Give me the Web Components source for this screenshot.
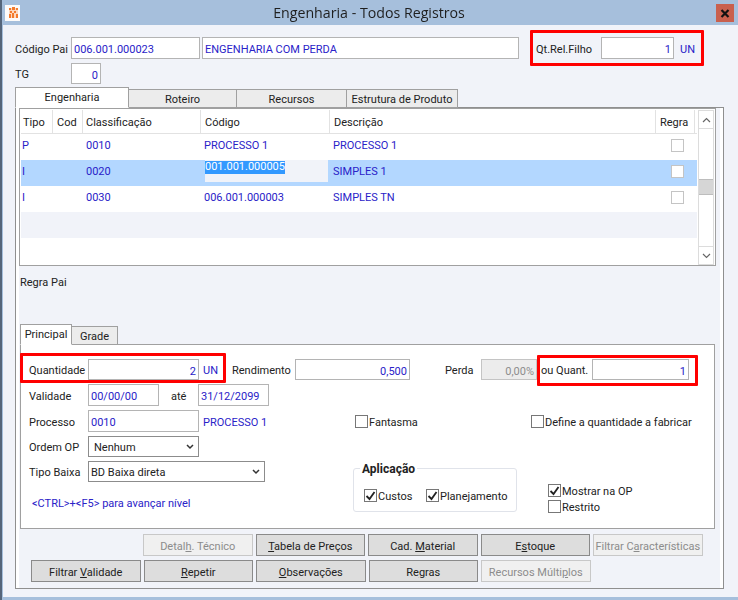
<!DOCTYPE html>
<html lang="pt">
<head>
<meta charset="utf-8">
<title>Engenharia - Todos Registros</title>
<style>
  html, body { margin: 0; padding: 0; width: 738px; height: 600px; overflow: hidden; background: #a6bfdc; }
  body { font: 11px Roboto, "Open Sans", "Liberation Sans", sans-serif; color: #222; }
  u { text-decoration: underline; }
</style>
</head>
<body>

<erp-window caption="Engenharia - Todos Registros">

  <erp-row top="12" left="12" height="22">
    <erp-text w="56">Código Pai</erp-text>
    <erp-input w="129" color="blue">006.001.000023</erp-input>
    <erp-input w="317" color="blue" style="margin-left:2px">ENGENHARIA COM PERDA</erp-input>
    <erp-text w="65" style="margin-left:17px">Qt.Rel.Filho</erp-text>
    <erp-input w="73" align="right" color="blue">1</erp-input>
    <erp-text color="blue" style="margin-left:6px">UN</erp-text>
  </erp-row>

  <erp-row top="4" left="12" height="21">
    <erp-text w="56">TG</erp-text>
    <erp-input w="30" align="right" color="blue">0</erp-input>
  </erp-row>

  <erp-tabs style="margin:4px 14px 0 12px;height:501px">
    <erp-tab slot="tabs" active w="114">Engenharia</erp-tab>
    <erp-tab slot="tabs" w="109">Roteiro</erp-tab>
    <erp-tab slot="tabs" w="111">Recursos</erp-tab>
    <erp-tab slot="tabs" w="112">Estrutura de Produto</erp-tab>

    <erp-grid>
      <erp-grid-row tipo="P" classif="0010" codigo="PROCESSO 1" descr="PROCESSO 1"></erp-grid-row>
      <erp-grid-row selected tipo="I" classif="0020" codigo="001.001.000005" descr="SIMPLES 1"></erp-grid-row>
      <erp-grid-row tipo="I" classif="0030" codigo="006.001.000003" descr="SIMPLES TN"></erp-grid-row>
      <erp-grid-row blank alt></erp-grid-row>
      <erp-grid-row blank></erp-grid-row>
    </erp-grid>

    <erp-row top="7" left="1" height="16"><erp-text>Regra Pai</erp-text></erp-row>

    <erp-tabs small style="margin:35px 5px 0 1px;height:205px">
      <erp-tab slot="tabs" active small w="52">Principal</erp-tab>
      <erp-tab slot="tabs" small w="47">Grade</erp-tab>

      <erp-row top="14" left="8" height="21">
        <erp-text w="59">Quantidade</erp-text>
        <erp-input w="111" align="right" color="blue">2</erp-input>
        <erp-text color="blue" w="29" style="margin-left:4px">UN</erp-text>
        <erp-text w="63">Rendimento</erp-text>
        <erp-input w="115" align="right" color="blue">0,500</erp-input>
        <erp-text w="36" style="margin-left:35px">Perda</erp-text>
        <erp-input w="56" align="right" disabled>0,00%</erp-input>
        <erp-text w="51" style="margin-left:4px">ou Quant.</erp-text>
        <erp-input w="97" align="right" color="blue">1</erp-input>
      </erp-row>

      <erp-row top="4" left="8" height="22">
        <erp-text w="59">Validade</erp-text>
        <erp-input w="71" color="blue">00/00/00</erp-input>
        <erp-text w="27" style="margin-left:12px">até</erp-text>
        <erp-input w="71" color="blue">31/12/2099</erp-input>
      </erp-row>

      <erp-row top="4" left="8" height="22">
        <erp-text w="59">Processo</erp-text>
        <erp-input w="111" color="blue">0010</erp-input>
        <erp-text color="blue" w="152" style="margin-left:4px">PROCESSO 1</erp-text>
        <erp-check w="176">Fantasma</erp-check>
        <erp-check>Define a quantidade a fabricar</erp-check>
      </erp-row>

      <erp-lower>
        <erp-row top="4" left="8" height="21">
          <erp-text w="59">Ordem OP</erp-text>
          <erp-select w="111" pad="5">Nenhum</erp-select>
        </erp-row>
        <erp-row top="4" left="8" height="21">
          <erp-text w="59">Tipo Baixa</erp-text>
          <erp-select w="177" pad="2">BD Baixa direta</erp-select>
        </erp-row>
        <erp-row top="10" left="11" height="20">
          <erp-text color="blue">&lt;CTRL&gt;+&lt;F5&gt; para avançar nível</erp-text>
        </erp-row>

        <erp-group slot="side" caption="Aplicação">
          <erp-check checked w="62">Custos</erp-check>
          <erp-check checked>Planejamento</erp-check>
        </erp-group>

        <erp-stack slot="side">
          <erp-check checked>Mostrar na OP</erp-check>
          <erp-check>Restrito</erp-check>
        </erp-stack>
      </erp-lower>
    </erp-tabs>

    <erp-buttons>
      <erp-button disabled>Detal<u>h</u>. Técnico</erp-button>
      <erp-button><u>T</u>abela de Preços</erp-button>
      <erp-button>Cad. <u>M</u>aterial</erp-button>
      <erp-button>E<u>s</u>toque</erp-button>
      <erp-button disabled>Filtrar C<u>a</u>racterísticas</erp-button>
    </erp-buttons>
    <erp-buttons first>
      <erp-button>Filtrar <u>V</u>alidade</erp-button>
      <erp-button><u>R</u>epetir</erp-button>
      <erp-button><u>O</u>bservações</erp-button>
      <erp-button>Re<u>g</u>ras</erp-button>
      <erp-button disabled>Recursos Múlti<u>p</u>los</erp-button>
    </erp-buttons>
  </erp-tabs>

  <!-- red annotation boxes drawn over the form -->
  <erp-mark x="530" y="30" w="174" h="36"></erp-mark>
  <erp-mark x="20" y="353" w="206" h="30"></erp-mark>
  <erp-mark x="537" y="355" w="161" h="31"></erp-mark>
</erp-window>

<script>
const BLUE = '#2a22c8';

// small helper, every element below follows the same pattern
class Base extends HTMLElement {
    constructor() {
        super();
        this.attachShadow({ mode: 'open' });
    }
    connectedCallback() {
        this.render();
    }
    attr(name, fallback) {
        return this.hasAttribute(name) ? this.getAttribute(name) : fallback;
    }
}

class ErpWindow extends Base {
    render() {
        this.shadowRoot.innerHTML = `
            <style>
                :host { display: flex; flex-direction: column; width: 738px; height: 600px; box-sizing: border-box; position: relative; filter: blur(0.3px);
                    background: linear-gradient(90deg, #55657a 2px, transparent 2px); }
                .bar { height: 25px; flex: none; display: flex; align-items: center; justify-content: center; position: relative;
                    font: 14.2px "Open Sans", sans-serif; color: #1f1f1f; }
                .icon { position: absolute; left: 5px; top: 5px; width: 15px; height: 16px; }
                .close { position: absolute; right: 4px; top: 4px; width: 18px; height: 18px; background: #c9604e; display: flex; align-items: center; justify-content: center; }
                .client { flex: none; height: 572px; margin-left: 3px; background: #f1f3f9; box-sizing: border-box; display: flex; flex-direction: column; }
            </style>
            <div class="bar">
                <svg class="icon" viewBox="0 0 15 16">
                    <rect width="15" height="16" fill="#fdfbfa"/>
                    <rect x="4" y="3" width="9" height="10" fill="#fcd9c0"/>
                    <path d="M4 3h2v2H4zM7 2h3v3H7zM11 3h2v2h-2zM5 6h2v2H5zM9 6h2v2H9zM4 9h2v4H4zM7 8h2v5H7zM11 9h2v4h-2z" fill="#f47a2c"/>
                </svg>
                ${this.attr('caption', '')}
                <div class="close">
                    <svg width="10" height="9" viewBox="0 0 10 9"><path d="M1.5 1l7 7M8.5 1l-7 7" stroke="#111" stroke-width="2.2"/></svg>
                </div>
            </div>
            <div class="client"><slot></slot></div>
        `;
    }
}

class ErpRow extends Base {
    render() {
        this.shadowRoot.innerHTML = `
            <style>
                :host { display: flex; align-items: center; flex: none;
                    margin-top: ${this.attr('top', 0)}px; margin-left: ${this.attr('left', 0)}px; height: ${this.attr('height', 22)}px; }
            </style>
            <slot></slot>
        `;
    }
}

class ErpText extends Base {
    render() {
        const w = this.attr('w');
        this.shadowRoot.innerHTML = `
            <style>
                :host { display: block; flex: none; white-space: nowrap; padding-top: 2px; ${w ? `width:${w}px;` : ''}
                    color: ${this.attr('color') === 'blue' ? BLUE : '#222'}; }
            </style>
            <slot></slot>
        `;
    }
}

class ErpInput extends Base {
    render() {
        const off = this.hasAttribute('disabled');
        this.shadowRoot.innerHTML = `
            <style>
                :host { display: block; flex: none; box-sizing: border-box; height: 100%; width: ${this.attr('w', 80)}px;
                    background: ${off ? '#ececec' : '#fff'}; border: 1px solid ${off ? '#c4c4c4' : '#b4b4b4'};
                    color: ${off ? '#8c8c8c' : BLUE}; }
                div { display: flex; height: 100%; align-items: center; padding: 3px 2px 0 2px; box-sizing: border-box;
                    justify-content: ${this.attr('align') === 'right' ? 'flex-end' : 'flex-start'}; white-space: nowrap; }
            </style>
            <div><span><slot></slot></span></div>
        `;
    }
}

class ErpSelect extends Base {
    render() {
        this.shadowRoot.innerHTML = `
            <style>
                :host { display: flex; align-items: center; justify-content: space-between; flex: none; box-sizing: border-box;
                    height: 100%; width: ${this.attr('w', 80)}px; background: #fff; border: 1px solid #8c8c8c;
                    padding: 0 4px 0 ${this.attr('pad', 5)}px; color: #222; }
                span { padding-top: 2px; }
            </style>
            <span><slot></slot></span>
            <svg width="8" height="6" viewBox="0 0 8 6"><path d="M1 1l3 3 3-3" fill="none" stroke="#333" stroke-width="1.5"/></svg>
        `;
    }
}

class ErpCheck extends Base {
    render() {
        const w = this.attr('w');
        const tick = this.hasAttribute('checked')
            ? '<svg width="11" height="10" viewBox="0 0 11 10"><path d="M1.5 5l3 3 5-7" fill="none" stroke="#222" stroke-width="1.8"/></svg>'
            : '';
        this.shadowRoot.innerHTML = `
            <style>
                :host { display: flex; align-items: center; flex: none; height: 13px; white-space: nowrap; ${w ? `width:${w}px;` : ''} color: #222; }
                .box { width: 13px; height: 13px; box-sizing: border-box; border: 1px solid #777; background: #fff; margin-right: 1px;
                    display: flex; align-items: center; justify-content: center; }
                .label { padding-top: 2px; }
            </style>
            <span class="box">${tick}</span><span class="label"><slot></slot></span>
        `;
    }
}

class ErpTabs extends Base {
    render() {
        const small = this.hasAttribute('small');
        this.shadowRoot.innerHTML = `
            <style>
                :host { display: flex; flex-direction: column; flex: none; box-sizing: border-box; }
                .strip { display: flex; align-items: flex-end; height: ${small ? 21 : 20}px; flex: none; position: relative; z-index: 1; margin-bottom: -1px; }
                .page { flex: 1; min-height: 0; box-sizing: border-box; border: 1px solid ${small ? '#a0a0a0' : '#8f8f8f'};
                    background: ${small ? '#fff' : '#f1f3f9'}; display: flex; flex-direction: column; }
                .page.main { box-shadow: inset 3px 0 0 #fff, inset -3px 0 0 #fff; padding: 0 3px; }
            </style>
            <div class="strip"><slot name="tabs"></slot></div>
            <div class="page ${small ? '' : 'main'}"><slot></slot></div>
        `;
    }
}

class ErpTab extends Base {
    render() {
        const active = this.hasAttribute('active');
        const h = active ? 21 : 19;
        this.shadowRoot.innerHTML = `
            <style>
                :host { display: flex; align-items: center; justify-content: center; flex: none; box-sizing: border-box;
                    width: ${this.attr('w', 80)}px; height: ${h}px; white-space: nowrap; color: #222;
                    background: ${active ? '#fff' : '#ececec'}; border: 1px solid #a0a0a0; margin-left: -1px;
                    ${active ? 'border-bottom-color:#fff; margin-left:0; position:relative; z-index:1;' : ''} }
                span { padding-top: ${active ? 0 : 2}px; }
            </style>
            <span><slot></slot></span>
        `;
    }
}

const GRID_COLS = '33px 30px 118px 129px 326px 39px';

class ErpGrid extends Base {
    render() {
        const heads = [['Tipo', 2], ['Cod', 3], ['Classificação', 2], ['Código', 3], ['Descrição', 3], ['Regra', 3]];
        this.shadowRoot.innerHTML = `
            <style>
                :host { display: flex; flex: none; height: 158px; margin-right: 4px; box-sizing: border-box;
                    background: #fff; border: 1px solid #a0a0a0; padding: 1px 1px 0 1px; }
                .body { flex: 1; min-width: 0; }
                .head { display: grid; grid-template-columns: ${GRID_COLS}; height: 23px; border-bottom: 1px solid #e2e2e2; color: #222; }
                .head span { display: flex; align-items: center; border-right: 1px solid #e2e2e2; margin-right: 1px; padding-top: 2px; box-sizing: border-box; }
                .scroll { width: 16px; flex: none; border: 1px solid #dcdcdc; box-sizing: border-box; margin-left: 1px; height: 155px;
                    display: flex; flex-direction: column; background: #fff; }
                .arrow { height: 17px; flex: none; display: flex; align-items: center; justify-content: center; border-bottom: 1px solid #dcdcdc; }
                .arrow.down { border-bottom: 0; border-top: 1px solid #dcdcdc; }
                .track { flex: 1; padding-top: 50px; box-sizing: border-box; }
                .thumb { height: 16px; background: #d6d6d6; border-top: 1px solid #bdbdbd; border-bottom: 1px solid #bdbdbd; box-sizing: border-box; }
            </style>
            <div class="body">
                <div class="head">${heads.map(h => `<span style="padding-left:${h[1]}px">${h[0]}</span>`).join('')}</div>
                <slot></slot>
            </div>
            <div class="scroll">
                <div class="arrow"><svg width="9" height="6" viewBox="0 0 9 6"><path d="M1 5l3.5-3.5L8 5" fill="none" stroke="#666" stroke-width="1.2"/></svg></div>
                <div class="track"><div class="thumb"></div></div>
                <div class="arrow down"><svg width="9" height="6" viewBox="0 0 9 6"><path d="M1 1l3.5 3.5L8 1" fill="none" stroke="#666" stroke-width="1.2"/></svg></div>
            </div>
        `;
    }
}

class ErpGridRow extends Base {
    render() {
        const selected = this.hasAttribute('selected');
        const bg = selected ? '#b3d7ff' : (this.hasAttribute('alt') ? '#f1f3f9' : '#fff');
        if (this.hasAttribute('blank')) {
            this.shadowRoot.innerHTML = `<style>:host { display: block; height: 26px; background: ${bg}; }</style>`;
            return;
        }
        const code = selected
            ? `<span class="edit"><span class="sel">${this.attr('codigo')}</span></span>`
            : `<span class="cell" style="padding-left:2px">${this.attr('codigo')}</span>`;
        this.shadowRoot.innerHTML = `
            <style>
                :host { display: grid; grid-template-columns: ${GRID_COLS}; height: 26px; background: ${bg}; color: ${BLUE}; }
                .cell { display: flex; align-items: center; white-space: nowrap; padding-bottom: 4px; box-sizing: border-box; }
                .edit { background: #f1f3f9; height: 22px; margin: 0 3px 0 3px; display: block; }
                .sel { background: #3399ff; color: #fff; display: inline-block; height: 13px; line-height: 12px; }
                .box { width: 13px; height: 13px; box-sizing: border-box; border: 1px solid #c4c4c4; background: #fff; margin-left: 14px; }
            </style>
            <span class="cell" style="padding-left:1px">${this.attr('tipo')}</span>
            <span class="cell"></span>
            <span class="cell" style="padding-left:2px">${this.attr('classif')}</span>
            ${code}
            <span class="cell" style="padding-left:2px">${this.attr('descr')}</span>
            <span class="cell"><span class="box"></span></span>
        `;
    }
}

class ErpLower extends Base {
    render() {
        this.shadowRoot.innerHTML = `
            <style>
                :host { display: flex; flex: none; }
                .left { width: 332px; flex: none; display: flex; flex-direction: column; }
                .right { display: flex; align-items: flex-start; padding-top: 36px; }
            </style>
            <div class="left"><slot></slot></div>
            <div class="right"><slot name="side"></slot></div>
        `;
    }
}

class ErpGroup extends Base {
    render() {
        this.shadowRoot.innerHTML = `
            <style>
                :host { display: flex; align-items: center; flex: none; position: relative; box-sizing: border-box; width: 164px; height: 44px;
                    border: 1px solid #e0e3ea; border-radius: 3px; padding: 11px 0 0 10px; margin-right: 31px; }
                .cap { position: absolute; left: 6px; top: -7px; background: #fff; padding: 0 2px; font-weight: 700; font-size: 12px; color: #222; }
            </style>
            <span class="cap">${this.attr('caption', '')}</span>
            <slot></slot>
        `;
    }
}

class ErpStack extends Base {
    render() {
        this.shadowRoot.innerHTML = `
            <style>
                :host { display: flex; flex-direction: column; gap: 3px; flex: none; margin-top: 16px; }
            </style>
            <slot></slot>
        `;
    }
}

class ErpButtons extends Base {
    render() {
        this.shadowRoot.innerHTML = `
            <style>
                :host { display: flex; gap: 3px; flex: none; margin-top: ${this.hasAttribute('first') ? 4 : 5}px;
                    margin-left: ${this.hasAttribute('first') ? 12 : 124}px; }
            </style>
            <slot></slot>
        `;
    }
}

class ErpButton extends Base {
    render() {
        const off = this.hasAttribute('disabled');
        this.shadowRoot.innerHTML = `
            <style>
                :host { display: flex; align-items: center; justify-content: center; flex: none; box-sizing: border-box; width: 109.5px; height: 22px;
                    white-space: nowrap; background: ${off ? '#f0f0f0' : '#dddddd'}; color: ${off ? '#8c8c8c' : '#222'};
                    border: 1px solid ${off ? '#c8c8c8' : '#8a8a8a'}; }
                span { padding-top: 2px; }
            </style>
            <span><slot></slot></span>
        `;
    }
}

// annotation rectangle, sits on top of the finished form
class ErpMark extends Base {
    render() {
        this.shadowRoot.innerHTML = `
            <style>
                :host { position: absolute; left: ${this.attr('x')}px; top: ${this.attr('y')}px; width: ${this.attr('w')}px; height: ${this.attr('h')}px;
                    box-sizing: border-box; border: 3px solid #f00; border-radius: 1px; pointer-events: none; }
            </style>
        `;
    }
}

customElements.define('erp-window', ErpWindow);
customElements.define('erp-row', ErpRow);
customElements.define('erp-text', ErpText);
customElements.define('erp-input', ErpInput);
customElements.define('erp-select', ErpSelect);
customElements.define('erp-check', ErpCheck);
customElements.define('erp-tabs', ErpTabs);
customElements.define('erp-tab', ErpTab);
customElements.define('erp-grid', ErpGrid);
customElements.define('erp-grid-row', ErpGridRow);
customElements.define('erp-lower', ErpLower);
customElements.define('erp-group', ErpGroup);
customElements.define('erp-stack', ErpStack);
customElements.define('erp-buttons', ErpButtons);
customElements.define('erp-button', ErpButton);
customElements.define('erp-mark', ErpMark);
</script>
</body>
</html>
